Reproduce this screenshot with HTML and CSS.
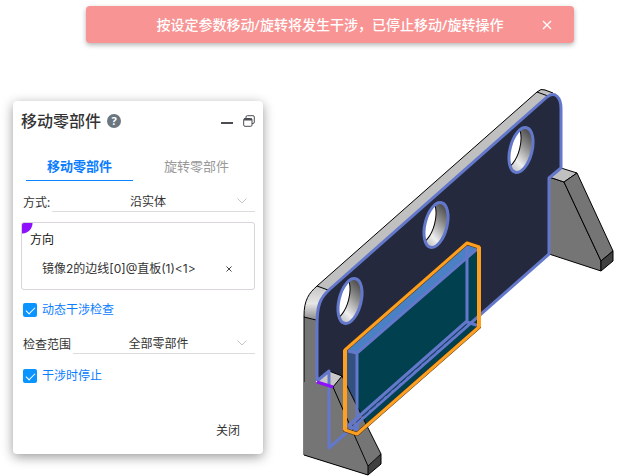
FILE: index.html
```html
<!DOCTYPE html>
<html lang="zh-Hans">
<head>
    <meta charset="UTF-8">
    <meta name="viewport" content="width=device-width, initial-scale=1.0">
    <title>移动零部件</title>
    <link rel="stylesheet" href="styles.css">
</head>
<body>
    <svg class="scene" viewBox="0 0 629 476" preserveAspectRatio="xMinYMin meet" aria-hidden="true">
        <defs>
            <linearGradient id="bore" x1="0.3" y1="0" x2="0" y2="1">
                <stop offset="0" stop-color="#555"/>
                <stop offset="0.25" stop-color="#8a8a8a"/>
                <stop offset="0.65" stop-color="#eee"/>
                <stop offset="1" stop-color="#aaa"/>
            </linearGradient>
            <linearGradient id="corner" x1="0" y1="0" x2="0" y2="1">
                <stop offset="0" stop-color="#c4c4c4"/>
                <stop offset="0.5" stop-color="#e6e6e6"/>
                <stop offset="1" stop-color="#858585"/>
            </linearGradient>
            <clipPath id="holeClip"><ellipse rx="11" ry="23" transform="rotate(14)"/></clipPath>
            <g id="hole">
                <ellipse rx="11" ry="23" transform="rotate(14)" fill="url(#bore)"/>
                <g clip-path="url(#holeClip)">
                    <ellipse cx="-12" cy="-4" rx="11" ry="23" transform="rotate(14 -12 -4)" fill="#fff" stroke="#000" stroke-width="1"/>
                </g>
                <ellipse rx="11" ry="23" transform="rotate(14)" fill="none" stroke="#6478cb" stroke-width="3"/>
            </g>
        </defs>

        <!-- right support -->
        <g stroke="#000" stroke-width="1" stroke-linejoin="round">
            <path d="M549 177L564 182L601 261V271L549 254Z" fill="#757575"/>
            <path d="M549 177L561 168L577 173L564 182Z" fill="#c0c0c0"/>
            <path d="M564 182L577 173L613 251L601 261Z" fill="#757575"/>
            <path d="M601 261L613 251V261L601 271Z" fill="#404040"/>
        </g>

        <!-- plate -->
        <path d="M304 316L316 320V388L368 466V475L304 455Z" fill="#757575"/>
        <path d="M317 286L537 92Q540 89 544 89L556 94L548 98L328 291Z" fill="#c0c0c0"/>
        <path d="M304 316C304 300 309 293 317 286L330 290C321 299 317 307 316 321Z" fill="url(#corner)"/>
        <path d="M304 455V316C304 300 309 293 317 286L537 92Q541 88 545 90L553 93M317 286L328 290M304 317L316 320M537 92L548 96" fill="none" stroke="#000"/>
        <path d="M317 381V325C317 305 320 298 330 289L547 97C555 91 561 97 561 109V168L549 178V254L329 448V371Z" fill="#24293d"/>
        <use href="#hole" x="350" y="301"/>
        <use href="#hole" x="436" y="225"/>
        <use href="#hole" x="521" y="150"/>

        <!-- moving block -->
        <path d="M357 353L478 249V327L357 433Z" fill="#00404f"/>
        <path d="M346 351L467 244L478 248L357 353Z" fill="#4a80c4"/>
        <path d="M346 350L357 353V433L346 429Z" fill="#32517f"/>

        <!-- left support -->
        <path d="M317 382L333 387L368 466V475L304 455V382Z" fill="#757575"/>
        <path d="M317 382L329 371L342 376L333 387Z" fill="#c8c8c8"/>
        <path d="M333 387L342 376L381 454L368 466Z" fill="#757575"/>
        <path d="M368 466L381 454V464L368 475Z" fill="#404040"/>
        <path d="M304 455L368 475L381 464V454L342 376L329 371M333 387L342 376M333 387L368 466V475M368 466L381 454" fill="none" stroke="#000" stroke-linejoin="round"/>

        <!-- highlighted edges -->
        <g fill="none" stroke="#6478cb" stroke-width="3" stroke-linejoin="round">
            <path d="M317 381V325C317 305 320 298 330 289L547 97C555 91 561 97 561 109V168L549 178V254L329 448V371L317 381"/>
            <path d="M348 351L357 353L477 249M357 353V431"/>
            <path d="M467 246V322L479 326M467 321L349 425L357 430"/>
        </g>
        <path d="M466 325L352 426" stroke="#24407c" stroke-dasharray="7 3" fill="none"/>
        <path d="M317 382L333 387" stroke="#8f0fff" stroke-width="3"/>
        <path d="M345 350L467 243L479 247V327L357 434L345 430Z" fill="none" stroke="#493114" stroke-width="4" stroke-linejoin="round"/>
        <path d="M345 350L467 243L479 247V327L357 434L345 430Z" fill="none" stroke="#ff9f1f" stroke-width="3" stroke-linejoin="round"/>
        <path d="M345 350V430M479 247V327" stroke="#ff9f1f" stroke-width="4"/>
    </svg>

    <div class="toast" role="alert">
        <span class="toast-text">按设定参数移动/旋转将发生干涉，已停止移动/旋转操作</span>
        <button class="toast-close" type="button" aria-label="关闭提示">
            <svg width="10" height="10" viewBox="0 0 10 10"><path d="M1 1L9 9M9 1L1 9" stroke="#fff" stroke-width="1.3"/></svg>
        </button>
    </div>

    <form class="panel">
        <header class="panel-header">
            <h1>移动零部件</h1>
            <button class="help" type="button" aria-label="帮助">?</button>
            <div class="window-buttons">
                <button type="button" aria-label="最小化">
                    <svg width="12" height="12" viewBox="0 0 12 12"><path d="M0 8H12" stroke="#4a4d52" stroke-width="2"/></svg>
                </button>
                <button type="button" aria-label="还原">
                    <svg width="12" height="12" viewBox="0 0 12 12" fill="none" stroke="#4a4d52"><path d="M3 3V2Q3 .7 4.300 .7H10Q11.300 .7 11.300 2V7Q11.300 8.500 10 8.500H9"/><rect x=".7" y="3.500" width="8.300" height="7.800" rx="1.200"/><path d="M1 4.500H9" stroke-width="2"/></svg>
                </button>
            </div>
        </header>

        <nav class="tabs">
            <button class="tab active" type="button">移动零部件</button>
            <button class="tab" type="button">旋转零部件</button>
        </nav>

        <div class="field">
            <label for="mode">方式:</label>
            <div class="select">
                <select id="mode"><option>沿实体</option></select>
                <svg class="chevron" width="10" height="6" viewBox="0 0 10 6"><path d="M.5 .5L5 5L9.500 .5"/></svg>
            </div>
        </div>

        <section class="picker">
            <h2>方向</h2>
            <div class="picked">
                <span>镜像2的边线[0]@直板(1)&lt;1&gt;</span>
                <button type="button" aria-label="移除">
                    <svg width="6" height="6" viewBox="0 0 6 6"><path d="M.5 .5L5.500 5.500M5.500 .5L.5 5.500" stroke="#444"/></svg>
                </button>
            </div>
        </section>

        <label class="check"><input type="checkbox" checked>动态干涉检查</label>

        <div class="field">
            <label for="range">检查范围</label>
            <div class="select">
                <select id="range"><option>全部零部件</option></select>
                <svg class="chevron" width="10" height="6" viewBox="0 0 10 6"><path d="M.5 .5L5 5L9.500 .5"/></svg>
            </div>
        </div>

        <label class="check"><input type="checkbox" checked>干涉时停止</label>

        <footer class="panel-footer">
            <button type="button">关闭</button>
        </footer>
    </form>
</body>
</html>
```
FILE: styles.css
```css
* {
    box-sizing: border-box;
}

body {
    margin: 0;
    padding: 6px 55px 0 86px;
    min-height: 100vh;
    background: #fff;
    color: #333;
    font-family: "Noto Sans", "Noto Sans CJK SC", sans-serif;
    font-size: 12px;
    line-height: 18px;
}

button {
    padding: 0;
    border: none;
    background: none;
    color: inherit;
    font: inherit;
    cursor: pointer;
}

svg {
    display: block;
}

.scene {
    position: absolute;
    top: 0;
    left: 0;
    width: 100%;
}

.toast {
    position: relative;
    display: flex;
    align-items: center;
    height: 37px;
    padding: 0 22px;
    border-radius: 4px;
    background: #f89494;
    color: #fff;
    font-size: 14px;
    font-weight: 500;
    box-shadow: 0 2px 5px rgba(0, 0, 0, 0.3);
}

.toast-text {
    flex: 1;
    text-align: center;
    padding-left: 10px;
    white-space: nowrap;
}

.panel {
    position: absolute;
    top: 101px;
    left: 13px;
    width: 250px;
    padding: 8px 8px 14px;
    border-radius: 4px;
    background: #fff;
    box-shadow: 0 3px 12px rgba(0, 0, 0, 0.4);
}

.panel-header {
    display: flex;
    align-items: center;
    gap: 6px;
    height: 24px;
}

.panel-header h1 {
    margin: 0;
    font-size: 16px;
    font-weight: 500;
}

.help {
    width: 14px;
    height: 14px;
    border-radius: 50%;
    background: #6b7680;
    color: #fff;
    font-size: 11px;
    font-weight: bold;
    line-height: 14px;
}

.window-buttons {
    display: flex;
    gap: 10px;
    margin-left: auto;
}

.tabs {
    display: flex;
    gap: 10px;
    margin: 20px 5px 10px;
}

.tab {
    flex: 1;
    height: 28px;
    padding-bottom: 2px;
    border-bottom: 1px solid transparent;
    color: #999;
    font-size: 13px;
}

.tab.active {
    border-bottom-color: #0a84ff;
    color: #0a7cff;
    font-weight: bold;
}

.field {
    display: flex;
    align-items: flex-end;
    gap: 2px;
    height: 21px;
    padding-left: 2px;
}

.select {
    position: relative;
    flex: 1;
    border-bottom: 1px solid #dcdcdc;
}

.select select {
    display: block;
    width: 100%;
    height: 20px;
    padding: 1px 11px 0 0;
    border: none;
    background: none;
    color: #333;
    font: inherit;
    text-align: center;
    text-align-last: center;
    appearance: none;
}

.chevron {
    position: absolute;
    top: 7px;
    right: 8px;
    fill: none;
    stroke: #c0c4cc;
    pointer-events: none;
}

.picker {
    height: 68px;
    margin: 10px 0 12px;
    padding: 8px;
    border: 1px solid #d9d4d9;
    border-radius: 3px;
    background: radial-gradient(circle at 0 0, #8f0fff 10px, transparent 11px) no-repeat;
}

.picker h2 {
    margin: 0 0 11px;
    color: #111;
    font-size: 12px;
    font-weight: normal;
}

.picked {
    display: flex;
    justify-content: space-between;
    align-items: center;
    padding: 0 14px 0 12px;
    font-family: Inter, "Noto Sans CJK SC", sans-serif;
}

.check {
    display: flex;
    align-items: center;
    gap: 5px;
    padding-left: 2px;
    margin-bottom: 15px;
    height: 16px;
    color: #0a7cff;
}

.check input {
    width: 14px;
    height: 14px;
    margin: 0;
    border-radius: 2px;
    background: #0a94ff;
    appearance: none;
}

.check input:checked::after {
    content: "";
    display: block;
    width: 8px;
    height: 4px;
    margin: 4px 3px;
    border-left: 1px solid #fff;
    border-bottom: 1px solid #fff;
    transform: rotate(-45deg);
}

.field + .check {
    margin: 14px 0 38px;
}

.panel-footer {
    display: flex;
    justify-content: flex-end;
    padding-right: 15px;
}
```
